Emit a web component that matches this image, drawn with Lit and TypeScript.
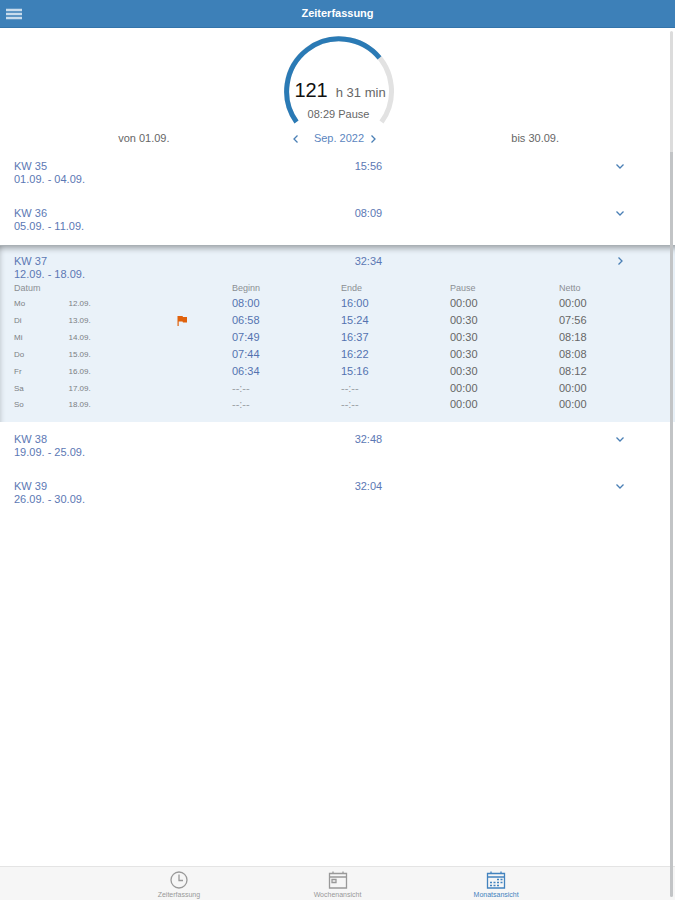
import { LitElement, html, svg, css, nothing } from "lit";
import { customElement, state } from "lit/decorators.js";
import { classMap } from "lit/directives/class-map.js";

interface Day {
  name: string;
  date: string;
  begin: string;
  end: string;
  pause: string;
  net: string;
  flagged?: boolean;
  weekend?: boolean;
}

interface Week {
  label: string;
  range: string;
  total: string;
  days: Day[];
}

const EMPTY = "--:--";

const WEEKS: Week[] = [
  { label: "KW 35", range: "01.09. - 04.09.", total: "15:56", days: [] },
  { label: "KW 36", range: "05.09. - 11.09.", total: "08:09", days: [] },
  {
    label: "KW 37",
    range: "12.09. - 18.09.",
    total: "32:34",
    days: [
      { name: "Mo", date: "12.09.", begin: "08:00", end: "16:00", pause: "00:00", net: "00:00" },
      { name: "Di", date: "13.09.", begin: "06:58", end: "15:24", pause: "00:30", net: "07:56", flagged: true },
      { name: "Mi", date: "14.09.", begin: "07:49", end: "16:37", pause: "00:30", net: "08:18" },
      { name: "Do", date: "15.09.", begin: "07:44", end: "16:22", pause: "00:30", net: "08:08" },
      { name: "Fr", date: "16.09.", begin: "06:34", end: "15:16", pause: "00:30", net: "08:12" },
      { name: "Sa", date: "17.09.", begin: EMPTY, end: EMPTY, pause: "00:00", net: "00:00", weekend: true },
      { name: "So", date: "18.09.", begin: EMPTY, end: EMPTY, pause: "00:00", net: "00:00", weekend: true },
    ],
  },
  { label: "KW 38", range: "19.09. - 25.09.", total: "32:48", days: [] },
  { label: "KW 39", range: "26.09. - 30.09.", total: "32:04", days: [] },
];

const clockIcon = svg`
  <circle cx="10" cy="10" r="8" />
  <path d="M10 4.500V10.500H14" />`;

const weekIcon = svg`
  <path d="M1.500 3.500H18.500V18H1.500ZM1.500 7H18.500M5 1.500V4M15 1.500V4" />
  <path d="M4 9.500H8V12.500H4Z" />`;

const monthIcon = svg`
  <path d="M1.500 3.500H18.500V18H1.500ZM1.500 7H18.500M5 1.500V4M15 1.500V4" />
  <path d="M11 9.500H13M14.500 9.500H16.500M4 12.500H6M7.500 12.500H9.500M11 12.500H13M14.500 12.500H16.500M4 15.500H6M7.500 15.500H9.500M11 15.500H13" />`;

const TABS = [
  { label: "Zeiterfassung", icon: clockIcon, active: false },
  { label: "Wochenansicht", icon: weekIcon, active: false },
  { label: "Monatsansicht", icon: monthIcon, active: true },
];

const chevron = (direction: "left" | "right" | "down") => {
  const paths = {
    left: "M7.500 2.500L4 6L7.500 9.500",
    right: "M4.500 2.500L8 6L4.500 9.500",
    down: "M2.500 4.500L6 8L9.500 4.500",
  };
  return html`<svg class="chevron" viewBox="0 0 12 12" aria-hidden="true">
    <path d=${paths[direction]} stroke-width="1.3" />
  </svg>`;
};

@customElement("app-root")
export class AppRoot extends LitElement {
  @state() private open = "KW 37";

  static styles = css`
    :host {
      display: flex;
      flex-direction: column;
      position: relative;
      min-height: 100vh;
      background: #fff;
      color: #666;
      font: 11px/13px "Liberation Sans", Arial, sans-serif;
    }
    button {
      border: 0;
      margin: 0;
      padding: 0;
      background: none;
      color: inherit;
      font: inherit;
      text-align: left;
      cursor: pointer;
    }
    svg {
      display: block;
      fill: none;
      stroke: currentColor;
    }
    .bar {
      display: grid;
      grid-template-columns: 1fr auto 1fr;
      align-items: center;
      box-sizing: border-box;
      height: 28px;
      padding: 0 6px;
      background: #3d80b8;
      border-bottom: 1px solid #3474aa;
      color: #fff;
    }
    .menu {
      width: 16px;
    }
    .menu svg {
      width: 16px;
      height: 12px;
      stroke: #c9dcec;
    }
    h1 {
      margin: 0;
      font-size: 11px;
      font-weight: 700;
    }
    main {
      flex: 1;
    }
    .gauge {
      display: grid;
      justify-content: center;
      padding: 7px 0 0 2px;
    }
    .gauge > * {
      grid-area: 1 / 1;
    }
    .dial {
      width: 112px;
      height: 94px;
      stroke-width: 5;
    }
    .track {
      stroke: #e2e2e2;
    }
    .done {
      stroke: #2a7ab5;
    }
    .reading {
      display: flex;
      flex-direction: column;
      align-items: center;
      justify-content: flex-end;
      gap: 5px;
      padding-bottom: 8px;
      white-space: nowrap;
    }
    .sum {
      display: flex;
      align-items: baseline;
      gap: 8px;
      padding-left: 3px;
      font-size: 13px;
      line-height: 20px;
    }
    .hours {
      color: #111;
      font-size: 20px;
    }
    .month {
      display: grid;
      grid-template-columns: repeat(3, 1fr);
      align-items: center;
      padding: 3px 42px 6px 46px;
      text-align: center;
    }
    .picker {
      display: flex;
      align-items: center;
      justify-content: center;
      padding-right: 10px;
      color: #5c86c0;
    }
    .picker span {
      margin: 0 3px 0 12px;
    }
    .chevron {
      width: 12px;
      height: 12px;
      stroke: #4a7fb5;
    }
    .week {
      color: #5c78b4;
    }
    .week.open {
      margin-bottom: 2px;
      background: #eaf2f9;
      box-shadow:
        inset 0 7px 6px -5px rgba(0, 0, 0, 0.35),
        inset 6px 0 5px -5px rgba(0, 0, 0, 0.15);
      padding-bottom: 10px;
      border-top: 1px solid #a9b0b5;
    }
    .summary {
      display: grid;
      grid-template-columns: 25fr 19fr 4fr;
      width: 100%;
      padding: 9px 7px 12px 14px;
    }
    .open .summary {
      padding-bottom: 1px;
    }
    .summary span {
      display: block;
    }
    .days {
      box-sizing: border-box;
      width: 100%;
      padding: 0 7px 0 14px;
    }
    table {
      width: 100%;
      table-layout: fixed;
      border-collapse: collapse;
      color: #666;
    }
    .narrow {
      width: 8.333%;
    }
    th,
    td {
      height: 17px;
      padding: 0;
      text-align: left;
      vertical-align: middle;
      font-weight: 400;
    }
    thead th {
      height: 13px;
      color: #8a8f94;
      font-size: 9px;
    }
    .weekend > * {
      height: 16px;
    }
    tbody th,
    .date {
      color: #7b8084;
      font-size: 8px;
    }
    .time {
      color: #5472b0;
    }
    .empty {
      color: #9a9fa4;
    }
    .flag {
      width: 10px;
      height: 10px;
      fill: #e0620d;
      stroke: none;
    }
    .tabs {
      display: flex;
      justify-content: center;
      box-sizing: border-box;
      height: 34px;
      background: #f6f6f6;
      border-top: 1px solid #e4e4e4;
      color: #999;
      font-size: 7px;
      line-height: 8px;
    }
    .tab {
      display: flex;
      flex-direction: column;
      align-items: center;
      width: 23.5%;
      padding-top: 3px;
      gap: 1px;
    }
    .tab svg {
      width: 20px;
      height: 20px;
    }
    .tab path,
    .tab circle {
      stroke-width: 1.3;
    }
    .tab.active {
      color: #4383be;
    }
    .scroll {
      position: absolute;
      top: 31px;
      right: 2px;
      bottom: 3px;
      width: 3px;
      border-radius: 2px;
      background: linear-gradient(#dcdcdc 14%, #c2c4c6 14%);
    }
  `;

  private renderDays(days: Day[]) {
    return html`
      <div class="days">
        <table>
          <colgroup>
            <col class="narrow" />
            <col />
            <col class="narrow" />
            <col /><col /><col /><col />
          </colgroup>
          <thead>
            <tr>
              <th colspan="3" scope="col">Datum</th>
              <th scope="col">Beginn</th>
              <th scope="col">Ende</th>
              <th scope="col">Pause</th>
              <th scope="col">Netto</th>
            </tr>
          </thead>
          <tbody>
            ${days.map(
              (day) => html`
                <tr class=${classMap({ weekend: !!day.weekend })}>
                  <th scope="row">${day.name}</th>
                  <td class="date">${day.date}</td>
                  <td>
                    ${day.flagged
                      ? html`<svg class="flag" viewBox="0 0 10 10" aria-hidden="true">
                          <path d="M0.500 0H5.500L6 1H10V6.500H6L5.500 5.500H1.700V10H0.500Z" />
                        </svg>`
                      : nothing}
                  </td>
                  <td class=${day.begin === EMPTY ? "empty" : "time"}>${day.begin}</td>
                  <td class=${day.end === EMPTY ? "empty" : "time"}>${day.end}</td>
                  <td>${day.pause}</td>
                  <td>${day.net}</td>
                </tr>
              `
            )}
          </tbody>
        </table>
      </div>
    `;
  }

  private renderWeek(week: Week) {
    const open = this.open === week.label;
    return html`
      <section class=${classMap({ week: true, open })}>
        <button
          class="summary"
          aria-expanded=${open ? "true" : "false"}
          @click=${() => (this.open = open ? "" : week.label)}
        >
          <span><span>${week.label}</span><span>${week.range}</span></span>
          <span>${week.total}</span>
          ${chevron(open ? "right" : "down")}
        </button>
        ${open && week.days.length ? this.renderDays(week.days) : nothing}
      </section>
    `;
  }

  render() {
    return html`
      <header class="bar">
        <button class="menu" aria-label="Menü">
          <svg viewBox="0 0 16 12" aria-hidden="true">
            <path d="M0 2H16M0 6H16M0 10H16" stroke-width="2.5" />
          </svg>
        </button>
        <h1>Zeiterfassung</h1>
      </header>
      <main>
        <div class="gauge">
          <svg class="dial" viewBox="0 0 112 94" aria-hidden="true">
            <path class="track" d="M13.500 87A52.500 52.500 0 1 1 98.500 87" />
            <path class="done" d="M13.500 87A52.500 52.500 0 0 1 96.500 22.800" />
          </svg>
          <div class="reading">
            <div class="sum"><span class="hours">121</span><span>h 31 min</span></div>
            <div>08:29 Pause</div>
          </div>
        </div>
        <div class="month">
          <span>von 01.09.</span>
          <div class="picker">
            <button aria-label="Vorheriger Monat">${chevron("left")}</button>
            <span>Sep. 2022</span>
            <button aria-label="Nächster Monat">${chevron("right")}</button>
          </div>
          <span>bis 30.09.</span>
        </div>
        ${WEEKS.map((week) => this.renderWeek(week))}
      </main>
      <nav class="tabs">
        ${TABS.map(
          (tab) => html`
            <button class=${classMap({ tab: true, active: tab.active })}>
              <svg viewBox="0 0 20 20" aria-hidden="true">${tab.icon}</svg>
              <span>${tab.label}</span>
            </button>
          `
        )}
      </nav>
      <div class="scroll"></div>
    `;
  }
}
